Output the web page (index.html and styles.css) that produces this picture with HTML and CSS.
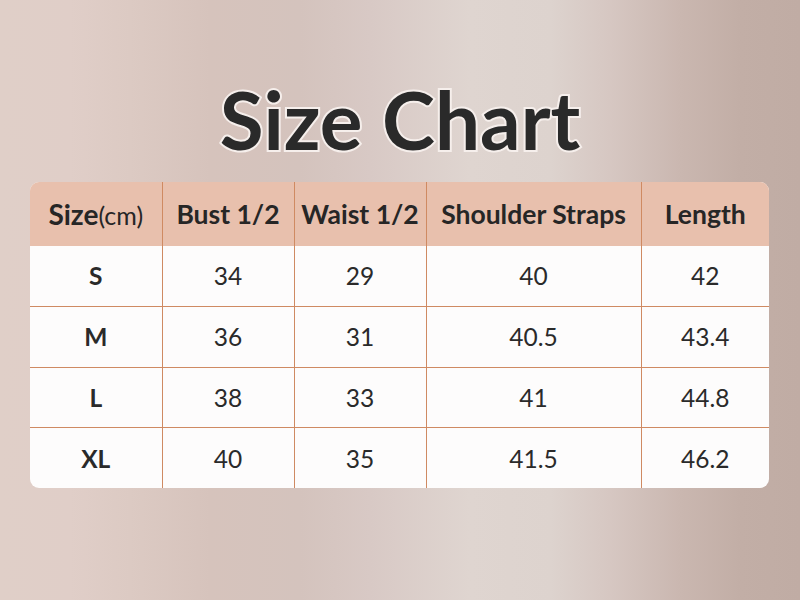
FILE: index.html
```html
<!DOCTYPE html>
<html lang="en">
<head>
<meta charset="utf-8">
<title>Size Chart</title>
<link rel="stylesheet" href="styles.css">
</head>
<body>
<main class="page">
  <h1 class="title">Size Chart</h1>
  <div class="card">
    <table class="chart">
      <colgroup>
        <col class="c1"><col class="c2"><col class="c3"><col class="c4"><col class="c5">
      </colgroup>
      <thead>
        <tr>
          <th><span class="size-label">Size</span><span class="unit">(cm)</span></th>
          <th>Bust 1/2</th>
          <th>Waist 1/2</th>
          <th>Shoulder Straps</th>
          <th>Length</th>
        </tr>
      </thead>
      <tbody>
        <tr><td class="size">S</td><td>34</td><td>29</td><td>40</td><td>42</td></tr>
        <tr><td class="size">M</td><td>36</td><td>31</td><td>40.5</td><td>43.4</td></tr>
        <tr><td class="size">L</td><td>38</td><td>33</td><td>41</td><td>44.8</td></tr>
        <tr><td class="size">XL</td><td>40</td><td>35</td><td>41.5</td><td>46.2</td></tr>
      </tbody>
    </table>
  </div>
</main>
</body>
</html>
```
FILE: styles.css
```css
html, body {
  margin: 0;
  padding: 0;
}
body {
  width: 800px;
  height: 600px;
  overflow: hidden;
  font-family: Lato, "Noto Sans", sans-serif;
  color: #2a2a2a;
  background: linear-gradient(90deg,
    #e0cfc8 0px, #e0cec8 70px, #dccac3 130px, #d6c3bc 210px,
    #d4c3bd 300px, #d8c9c5 370px, #dfd5d0 470px, #ddd3ce 550px,
    #d6c7c2 610px, #cab7b0 680px, #c2aea6 740px, #c0aca4 800px);
}
.page {
  display: flex;
  flex-direction: column;
  align-items: center;
  padding-top: 79px;
}
.title {
  margin: 0 0 23px;
  font-size: 80px;
  line-height: 80px;
  font-weight: 700;
  color: #2a2a2a;
  -webkit-text-stroke: 4px #f6efec;
  paint-order: stroke fill;
}
.card {
  width: 739px;
  margin-left: -1px;
  border-radius: 9px;
  overflow: hidden;
  background: #fdfcfc;
}
.chart {
  width: 100%;
  border-collapse: collapse;
  table-layout: fixed;
}
.c1 { width: 132px; }
.c2 { width: 132px; }
.c3 { width: 132px; }
.c4 { width: 215px; }
.c5 { width: 128px; }
.chart th, .chart td {
  padding: 0;
  text-align: center;
  border-left: 1px solid #cf8a62;
}
.chart th:first-child, .chart td:first-child {
  border-left: none;
}
.chart thead th {
  height: 64px;
  background: #e8c0ad;
  font-size: 26.5px;
  font-weight: 700;
  color: #262626;
  white-space: nowrap;
}
.size-label {
  font-size: 28px;
}
.unit {
  font-weight: 400;
  font-size: 25px;
}
.chart tbody td {
  height: 59.75px;
  font-size: 24.5px;
  font-weight: 400;
  color: #2a2a2a;
  border-top: 1px solid #cf8a62;
}
.chart tbody tr:first-child td {
  border-top: none;
}
.chart tbody td.size {
  font-weight: 700;
}
```
